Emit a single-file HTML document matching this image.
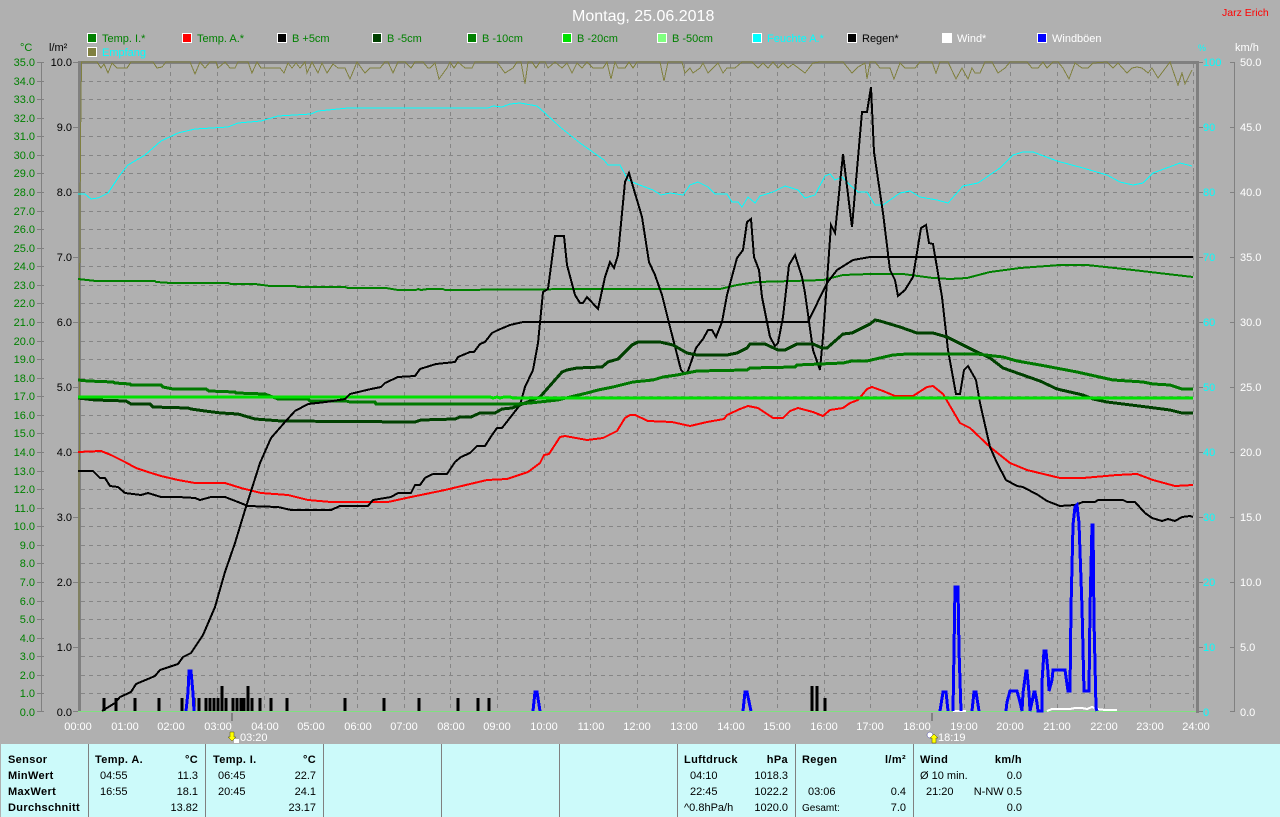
<!DOCTYPE html>
<html><head><meta charset="utf-8"><title>Montag, 25.06.2018</title>
<style>
html,body{margin:0;padding:0;background:#b0b0b0;width:1280px;height:817px;overflow:hidden}
svg{display:block}
text{font-family:"Liberation Sans",sans-serif;font-size:11px}
polyline{fill:none;stroke-linejoin:miter}
.b{font-weight:bold;letter-spacing:.35px;fill:#000}
.v{fill:#000}
.e{text-anchor:end}
.g text{fill:#008000;text-anchor:end}
.k text{fill:#000;text-anchor:end}
.c text{fill:#00ffff}
.w text{fill:#fff}
.t text{fill:#fff;text-anchor:middle}
</style></head><body>
<svg width="1280" height="817" viewBox="0 0 1280 817" xmlns="http://www.w3.org/2000/svg">
<rect width="1280" height="817" fill="#b0b0b0"/>

<!-- grid -->
<path shape-rendering="crispEdges" stroke="#858585" stroke-width="1" stroke-dasharray="4 4" fill="none" d="M81 81.5H1194M81 99.5H1194M81 118.5H1194M81 136.5H1194M81 155.5H1194M81 173.5H1194M81 192.5H1194M81 211.5H1194M81 229.5H1194M81 248.5H1194M81 266.5H1194M81 285.5H1194M81 303.5H1194M81 322.5H1194M81 341.5H1194M81 359.5H1194M81 378.5H1194M81 396.5H1194M81 415.5H1194M81 433.5H1194M81 452.5H1194M81 471.5H1194M81 489.5H1194M81 508.5H1194M81 526.5H1194M81 545.5H1194M81 563.5H1194M81 582.5H1194M81 601.5H1194M81 619.5H1194M81 638.5H1194M81 656.5H1194M81 675.5H1194M81 693.5H1194M124.5 64V712M170.5 64V712M217.5 64V712M264.5 64V712M310.5 64V712M357.5 64V712M404.5 64V712M450.5 64V712M497.5 64V712M544.5 64V712M590.5 64V712M637.5 64V712M684.5 64V712M730.5 64V712M777.5 64V712M824.5 64V712M870.5 64V712M917.5 64V712M964.5 64V712M1010.5 64V712M1057.5 64V712M1104.5 64V712M1150.5 64V712M1193.5 64V712"/>

<!-- frame and axes -->
<g shape-rendering="crispEdges" fill="#808080">
<rect x="78" y="61" width="1120" height="3"/>
<rect x="78" y="61" width="3" height="651"/>
<rect x="1196" y="61" width="3" height="652"/>
<rect x="41" y="62" width="1" height="650"/>
<rect x="1234" y="62" width="1" height="650"/>
<rect x="231" y="713" width="2" height="8"/>
<rect x="931" y="713" width="2" height="8"/>
</g>
<path shape-rendering="crispEdges" stroke="#808080" fill="none" d="M37 62.5H44M37 81.5H44M37 99.5H44M37 118.5H44M37 136.5H44M37 155.5H44M37 173.5H44M37 192.5H44M37 211.5H44M37 229.5H44M37 248.5H44M37 266.5H44M37 285.5H44M37 303.5H44M37 322.5H44M37 341.5H44M37 359.5H44M37 378.5H44M37 396.5H44M37 415.5H44M37 433.5H44M37 452.5H44M37 471.5H44M37 489.5H44M37 508.5H44M37 526.5H44M37 545.5H44M37 563.5H44M37 582.5H44M37 601.5H44M37 619.5H44M37 638.5H44M37 656.5H44M37 675.5H44M37 693.5H44M37 711.5H44M73 62.5H78M73 127.5H78M73 192.5H78M73 257.5H78M73 322.5H78M73 387.5H78M73 452.5H78M73 517.5H78M73 582.5H78M73 647.5H78M73 711.5H78M1198 62.5H1203M1198 127.5H1203M1198 192.5H1203M1198 257.5H1203M1198 322.5H1203M1198 387.5H1203M1198 452.5H1203M1198 517.5H1203M1198 582.5H1203M1198 647.5H1203M1198 711.5H1203M1230 62.5H1235M1230 127.5H1235M1230 192.5H1235M1230 257.5H1235M1230 322.5H1235M1230 387.5H1235M1230 452.5H1235M1230 517.5H1235M1230 582.5H1235M1230 647.5H1235M1230 711.5H1235"/>

<!-- series -->
<g shape-rendering="crispEdges">
<polyline stroke="#808040" stroke-width="1" points="79,630 79.5,305 80.5,143 81.5,62 97,62 101,68 104,64 108,73 112,63 117,68 127,68 131,62 153,62 157,68 162,67 166,62 190,62 195,74 200,62 205,68 210,62 216,62 218,68 225,62 230,68 235,68 238,62 248,62 252,73 257,62 261,68 280,68 284,73 288,63 292,68 296,63 300,68 305,62 307,73 312,62 318,73 322,63 327,73 333,64 338,68 345,68 350,79 357,62 365,73 370,68 380,68 385,62 388,62 393,73 398,62 405,62 411,68 415,62 423,62 428,68 430,68 435,63 439,79 447,68 450,62 454,68 458,62 465,68 472,68 475,62 497,62 505,73 513,68 517,62 521,62 525,84 528,62 532,62 536,68 540,62 545,62 548,68 555,62 562,68 567,63 572,73 577,63 582,68 587,62 593,68 603,68 607,62 611,79 615,62 618,68 625,68 629,62 633,68 637,62 660,62 664,81 668,62 682,62 685,73 690,68 693,73 700,68 703,63 708,73 713,68 718,63 723,73 727,68 735,68 742,62 752,62 758,68 763,63 768,68 773,62 778,68 783,63 788,68 793,64 805,73 813,63 820,62 843,62 852,73 858,67 865,63 867,79 870,62 875,62 880,68 890,68 894,79 900,63 905,68 915,68 920,62 932,62 936,73 940,62 948,62 956,79 962,68 968,79 972,68 975,73 980,73 985,62 992,62 998,73 1005,68 1010,62 1027,62 1032,68 1038,68 1043,62 1047,68 1053,62 1058,62 1063,68 1069,79 1075,63 1082,68 1088,68 1093,63 1107,62 1113,68 1118,63 1127,73 1132,68 1137,67 1142,68 1148,73 1152,68 1158,78 1170,62 1178,85 1182,73 1185,84 1192,70"/>

<polyline stroke="#00ffff" stroke-width="1" points="78,194 85,194 91,199 98,198 108,193 120,175 128,165 145,155 161,141 178,133 195,129 228,127 238,123 261,121 278,116 311,114 318,111 348,108 488,108 493,106 502,107 510,104 520,103 537,106 545,113 560,127 580,143 604,160 608,165 620,165 628,180 637,184 653,190 661,195 670,193 683,195 690,185 698,182 708,187 715,194 727,194 732,202 738,202 742,207 748,197 755,203 760,196 773,192 785,186 798,190 805,198 815,195 825,176 830,174 835,180 842,177 850,185 858,192 867,192 875,205 883,205 900,193 910,191 920,197 937,200 948,203 963,186 978,183 1000,168 1013,155 1023,152 1033,152 1057,161 1083,168 1107,175 1120,182 1133,185 1143,183 1153,173 1180,163 1192,166"/>

<polyline stroke="#008000" stroke-width="2" points="78,279 96,281 155,281 156,282 171,283 228,283 231,284 255,284 270,286 295,286 298,287 345,287 348,288 386,288 398,290 416,290 418,289 421,290 428,289 443,289 445,290 587,289 720,289 737,285 757,282 793,281 823,280 843,275 870,274 903,274 933,278 950,279 967,278 990,272 1020,268 1060,265 1087,265 1133,270 1167,274 1193,277"/>

<polyline stroke="#ff0000" stroke-width="2" points="78,452 101,451 111,455 125,462 136,468 148,472 161,476 178,480 195,483 225,483 241,488 261,493 288,495 308,500 331,502 371,502 388,502 411,497 445,490 470,484 487,480 507,479 528,472 540,463 544,455 549,454 560,437 565,436 587,440 603,438 617,431 625,418 630,415 635,415 648,421 672,422 690,426 707,422 724,419 727,415 740,409 748,406 758,408 773,418 783,418 790,411 798,408 813,412 823,416 830,410 843,408 850,403 858,400 867,389 872,387 883,391 895,396 913,396 927,387 933,386 943,394 960,423 970,428 990,447 1010,463 1027,470 1060,478 1083,478 1117,475 1137,474 1153,480 1175,486 1193,485"/>

<polyline stroke="#000" stroke-width="2" points="78,471 93,471 100,478 105,478 110,486 118,487 125,493 141,495 148,493 161,497 178,497 195,498 200,500 211,497 225,497 238,502 248,506 278,507 291,510 331,510 340,506 368,506 373,500 391,497 398,493 411,493 415,485 420,485 425,478 433,474 447,474 455,462 461,457 470,453 477,446 485,446 492,435 497,428 502,428 520,405 525,387 533,370 538,343 543,292 548,289 555,236 564,236 567,265 575,295 580,303 583,303 587,297 598,309 605,277 610,262 614,268 618,255 625,182 629,173 637,200 642,217 649,262 655,275 662,295 670,327 681,370 685,374 688,371 696,348 703,339 708,330 712,330 716,337 722,322 727,295 737,258 743,250 747,222 751,219 754,257 759,270 762,297 770,337 775,346 778,343 783,317 789,265 795,255 802,277 805,293 813,350 820,370 823,337 831,225 835,233 843,154 852,227 862,112 867,112 871,87 874,152 883,213 890,270 895,280 898,296 905,290 913,277 921,228 926,225 929,243 933,244 942,297 948,350 956,394 960,394 964,370 968,366 976,380 980,403 990,447 997,463 1006,480 1017,486 1023,487 1038,495 1047,501 1060,506 1075,505 1083,502 1095,502 1098,500 1123,500 1127,502 1135,502 1145,513 1152,518 1162,521 1168,519 1175,521 1182,517 1190,516 1193,517"/>

<polyline stroke="#004000" stroke-width="3" points="78,398 95,400 126,401 131,404 150,404 153,407 188,408 191,409 205,411 221,413 238,414 255,419 281,421 415,422 421,420 455,419 460,417 471,417 480,413 495,413 502,409 512,408 520,405 540,397 562,372 567,370 577,368 602,367 608,362 618,359 632,345 638,342 660,342 673,345 687,353 697,355 727,355 737,353 747,348 750,344 765,344 778,350 785,350 797,344 813,344 822,348 827,348 843,334 852,333 870,324 875,320 880,321 900,327 917,333 933,333 947,337 973,350 990,358 1003,368 1020,374 1040,381 1057,389 1083,395 1093,399 1107,402 1147,407 1170,410 1182,413 1193,413"/>

<polyline stroke="#007800" stroke-width="3" points="78,380 88,381 113,382 115,383 130,384 131,385 161,385 163,387 173,389 206,389 209,391 235,392 236,393 265,394 278,399 308,399 310,401 346,401 350,402 375,402 376,404 517,404 530,403 558,400 570,397 587,393 598,390 613,387 633,382 653,380 663,377 677,375 697,371 747,370 750,368 795,367 797,365 820,364 843,363 852,361 867,361 893,355 907,354 977,354 1003,357 1017,361 1040,365 1077,372 1113,380 1143,382 1153,384 1170,385 1182,389 1193,389"/>

<polyline stroke="#00e000" stroke-width="3" points="78,397 490,397 493,398 497,397 500,398 504,397 510,397 513,398 1193,398"/>
<rect x="78" y="711" width="1118" height="1" fill="#80e080"/>

<!-- rain -->
<polyline stroke="#000" stroke-width="2" points="102,711 115,703 120,697 131,692 136,684 155,676 160,670 178,664 183,657 191,653 203,635 215,607 225,572 235,543 245,510 260,463 271,438 285,422 295,411 308,404 326,402 345,399 350,394 371,389 381,387 385,383 398,377 415,376 420,369 436,364 455,362 458,357 470,352 474,352 480,344 485,342 492,333 498,330 510,325 523,322 808,322 827,283 837,270 853,260 870,257 1193,257"/>
<path stroke="#000" stroke-width="3" fill="none" d="M104 711V698M116 711V698M135 711V698M159 711V698M182 711V698M194 711V698M199 711V698M206 711V698M210 711V698M214 711V698M218 711V698M222 711V686M226 711V698M233 711V698M237 711V698M241 711V698M244 711V698M248 711V686M252 711V698M260 711V698M271 711V698M287 711V698M345 711V698M384 711V698M419 711V698M458 711V698M478 711V698M489 711V698M812 711V686M817 711V686M825 711V698"/>

<!-- wind -->
<polyline stroke="#fff" stroke-width="2" points="953,711 966,711"/>
<polyline stroke="#fff" stroke-width="2" points="1047,711 1052,709 1070,709 1075,708 1082,708 1087,709 1092,707 1097,709 1105,710 1117,710"/>

<!-- gusts -->
<g stroke="#0000ff" stroke-width="3">
<polyline points="186,711 188,692 189,671 191,671 193,693 194,711"/>
<polyline points="533,711 535,692 537,692 540,711"/>
<polyline points="743,711 745,692 747,692 751,711"/>
<polyline points="940,711 943,692 946,692 948,711"/>
<polyline points="953,711 954,650 955,587 958,587 959,650 961,711"/>
<polyline points="972,711 974,692 976,692 979,711"/>
<polyline points="1006,711 1007,702 1010,691 1017,691 1020,702 1022,711 1023,693 1026,671 1027,671 1029,693 1030,711 1032,702 1034,692 1035,692 1037,703 1038,711 1042,711 1042,682 1044,651 1046,651 1048,672 1049,691 1052,680 1053,670 1065,670 1068,691 1070,691 1071,608 1073,525 1075,507 1077,505 1079,523 1082,607 1084,691 1089,691 1090,608 1092,525 1093,525 1094,620 1096,708 1097,711"/>
</g>
</g>

<!-- title -->
<text x="572" y="21" style="font-size:16px" fill="#fff">Montag, 25.06.2018</text>
<text x="1222" y="16" style="font-size:10.5px" fill="#ff0000">Jarz Erich</text>

<!-- legend -->
<g shape-rendering="crispEdges" stroke="#fff" stroke-width="1">
<rect x="87.5" y="33.5" width="9" height="9" fill="#008000"/>
<rect x="182.5" y="33.5" width="9" height="9" fill="#ff0000"/>
<rect x="277.5" y="33.5" width="9" height="9" fill="#000"/>
<rect x="372.5" y="33.5" width="9" height="9" fill="#004000"/>
<rect x="467.5" y="33.5" width="9" height="9" fill="#008000"/>
<rect x="562.5" y="33.5" width="9" height="9" fill="#00e000"/>
<rect x="657.5" y="33.5" width="9" height="9" fill="#80ff80"/>
<rect x="752.5" y="33.5" width="9" height="9" fill="#00ffff"/>
<rect x="847.5" y="33.5" width="9" height="9" fill="#000"/>
<rect x="942.5" y="33.5" width="9" height="9" fill="#fff"/>
<rect x="1037.5" y="33.5" width="9" height="9" fill="#0000ff"/>
<rect x="87.5" y="47.5" width="9" height="9" fill="#808040"/>
</g>
<text x="102" y="42" fill="#008000">Temp. I.*</text>
<text x="197" y="42" fill="#008000">Temp. A.*</text>
<text x="292" y="42" fill="#008000">B +5cm</text>
<text x="387" y="42" fill="#008000">B -5cm</text>
<text x="482" y="42" fill="#008000">B -10cm</text>
<text x="577" y="42" fill="#008000">B -20cm</text>
<text x="672" y="42" fill="#008000">B -50cm</text>
<text x="767" y="42" fill="#00ffff">Feuchte A.*</text>
<text x="862" y="42" fill="#000">Regen*</text>
<text x="957" y="42" fill="#fff">Wind*</text>
<text x="1052" y="42" fill="#fff">Windböen</text>
<text x="102" y="56" fill="#00ffff">Empfang</text>

<!-- axis headings -->
<text x="20" y="51" fill="#008000">°C</text>
<text x="49" y="51" fill="#000">l/m²</text>
<text x="1198" y="51" fill="#00ffff" style="font-size:9px">%</text>
<text x="1235" y="51" fill="#fff">km/h</text>

<!-- left temp axis -->
<g class="g">
<text x="35" y="66">35.0</text><text x="35" y="85">34.0</text><text x="35" y="103">33.0</text><text x="35" y="122">32.0</text><text x="35" y="140">31.0</text><text x="35" y="159">30.0</text><text x="35" y="177">29.0</text><text x="35" y="196">28.0</text><text x="35" y="215">27.0</text><text x="35" y="233">26.0</text><text x="35" y="252">25.0</text><text x="35" y="270">24.0</text><text x="35" y="289">23.0</text><text x="35" y="307">22.0</text><text x="35" y="326">21.0</text><text x="35" y="345">20.0</text><text x="35" y="363">19.0</text><text x="35" y="382">18.0</text><text x="35" y="400">17.0</text><text x="35" y="419">16.0</text><text x="35" y="437">15.0</text><text x="35" y="456">14.0</text><text x="35" y="475">13.0</text><text x="35" y="493">12.0</text><text x="35" y="512">11.0</text><text x="35" y="530">10.0</text><text x="35" y="549">9.0</text><text x="35" y="567">8.0</text><text x="35" y="586">7.0</text><text x="35" y="605">6.0</text><text x="35" y="623">5.0</text><text x="35" y="642">4.0</text><text x="35" y="660">3.0</text><text x="35" y="679">2.0</text><text x="35" y="697">1.0</text><text x="35" y="716">0.0</text>
</g>
<!-- rain axis -->
<g class="k">
<text x="72" y="66">10.0</text><text x="72" y="131">9.0</text><text x="72" y="196">8.0</text><text x="72" y="261">7.0</text><text x="72" y="326">6.0</text><text x="72" y="391">5.0</text><text x="72" y="456">4.0</text><text x="72" y="521">3.0</text><text x="72" y="586">2.0</text><text x="72" y="651">1.0</text><text x="72" y="716">0.0</text>
</g>
<!-- humidity axis -->
<g class="c">
<text x="1203" y="66">100</text><text x="1203" y="131">90</text><text x="1203" y="196">80</text><text x="1203" y="261">70</text><text x="1203" y="326">60</text><text x="1203" y="391">50</text><text x="1203" y="456">40</text><text x="1203" y="521">30</text><text x="1203" y="586">20</text><text x="1203" y="651">10</text><text x="1203" y="716">0</text>
</g>
<!-- wind axis -->
<g class="w">
<text x="1240" y="66">50.0</text><text x="1240" y="131">45.0</text><text x="1240" y="196">40.0</text><text x="1240" y="261">35.0</text><text x="1240" y="326">30.0</text><text x="1240" y="391">25.0</text><text x="1240" y="456">20.0</text><text x="1240" y="521">15.0</text><text x="1240" y="586">10.0</text><text x="1240" y="651">5.0</text><text x="1240" y="716">0.0</text>
</g>
<!-- time axis -->
<g class="t">
<text x="78" y="730">00:00</text><text x="125" y="730">01:00</text><text x="171" y="730">02:00</text><text x="218" y="730">03:00</text><text x="265" y="730">04:00</text><text x="311" y="730">05:00</text><text x="358" y="730">06:00</text><text x="404" y="730">07:00</text><text x="451" y="730">08:00</text><text x="497" y="730">09:00</text><text x="544" y="730">10:00</text><text x="591" y="730">11:00</text><text x="637" y="730">12:00</text><text x="684" y="730">13:00</text><text x="731" y="730">14:00</text><text x="777" y="730">15:00</text><text x="824" y="730">16:00</text><text x="870" y="730">17:00</text><text x="917" y="730">18:00</text><text x="964" y="730">19:00</text><text x="1010" y="730">20:00</text><text x="1057" y="730">21:00</text><text x="1104" y="730">22:00</text><text x="1150" y="730">23:00</text><text x="1196" y="730">24:00</text>
</g>

<!-- sun markers -->
<path d="M230 732H234V737H236L232 741L228 737H230Z" fill="#ffff00" stroke="#505000" stroke-width=".5"/>
<rect x="234" y="739" width="5" height="4" fill="#fff"/>
<text x="240" y="741" fill="#fff">03:20</text>
<circle cx="930" cy="735" r="3" fill="#fff" stroke="#4040a0" stroke-width=".5"/>
<path d="M932 743V738H930L934 734L938 738H936V743Z" fill="#ffff00" stroke="#505000" stroke-width=".5"/>
<text x="938" y="741" fill="#fff">18:19</text>

<!-- panel -->
<rect x="1" y="744" width="1279" height="73" fill="#ccfafa"/>
<path shape-rendering="crispEdges" stroke="#808080" stroke-width="1" fill="none" d="M88.5 744V817M205.5 744V817M323.5 744V817M441.5 744V817M559.5 744V817M677.5 744V817M795.5 744V817M913.5 744V817"/>

<text class="b" x="8" y="763">Sensor</text>
<text class="b" x="8" y="779">MinWert</text>
<text class="b" x="8" y="795">MaxWert</text>
<text class="b" x="8" y="811">Durchschnitt</text>

<text class="b" x="95" y="763">Temp. A.</text>
<text class="b e" x="198" y="763">°C</text>
<text class="v" x="100" y="779">04:55</text><text class="v e" x="198" y="779">11.3</text>
<text class="v" x="100" y="795">16:55</text><text class="v e" x="198" y="795">18.1</text>
<text class="v e" x="198" y="811">13.82</text>

<text class="b" x="213" y="763">Temp. I.</text>
<text class="b e" x="316" y="763">°C</text>
<text class="v" x="218" y="779">06:45</text><text class="v e" x="316" y="779">22.7</text>
<text class="v" x="218" y="795">20:45</text><text class="v e" x="316" y="795">24.1</text>
<text class="v e" x="316" y="811">23.17</text>

<text class="b" x="684" y="763">Luftdruck</text>
<text class="b e" x="788" y="763">hPa</text>
<text class="v" x="690" y="779">04:10</text><text class="v e" x="788" y="779">1018.3</text>
<text class="v" x="690" y="795">22:45</text><text class="v e" x="788" y="795">1022.2</text>
<text class="v" x="684" y="811">^0.8hPa/h</text><text class="v e" x="788" y="811">1020.0</text>

<text class="b" x="802" y="763">Regen</text>
<text class="b e" x="906" y="763">l/m²</text>
<text class="v" x="808" y="795">03:06</text><text class="v e" x="906" y="795">0.4</text>
<text class="v" x="802" y="811" style="font-size:10px">Gesamt:</text><text class="v e" x="906" y="811">7.0</text>

<text class="b" x="920" y="763">Wind</text>
<text class="b e" x="1022" y="763">km/h</text>
<text class="v" x="920" y="779">Ø 10 min.</text><text class="v e" x="1022" y="779">0.0</text>
<text class="v" x="926" y="795">21:20</text><text class="v e" x="1022" y="795">N-NW 0.5</text>
<text class="v e" x="1022" y="811">0.0</text>
</svg>
</body></html>
